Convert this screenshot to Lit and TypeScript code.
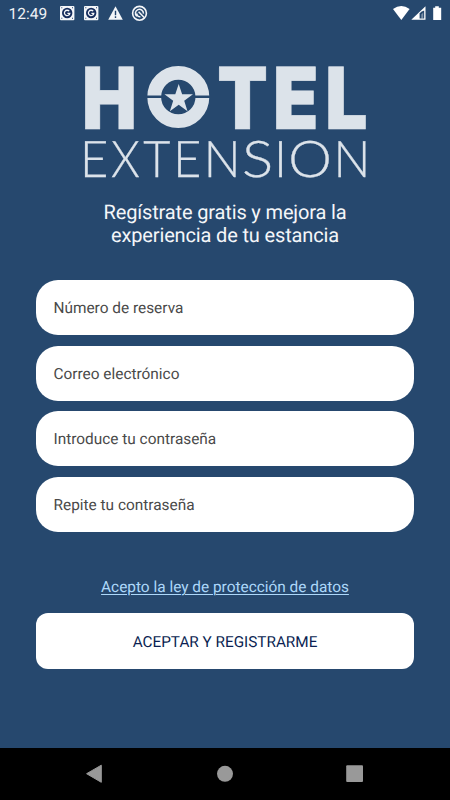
import { LitElement, html, css, svg } from "lit";
import { customElement, property } from "lit/decorators.js";

@customElement("status-bar")
class StatusBar extends LitElement {
  static styles = css`
    :host { display: flex; height: 28px; align-items: center; justify-content: space-between; color: #eef1f5; }
    .time { font: 400 15.5px/28px Roboto, sans-serif; text-rendering: geometricPrecision; width: 50px; padding-left: 8.5px; box-sizing: border-box; }
    .left { display: flex; align-items: center; }
    .icons { display: block; }
  `;
  private gBox(x: number) {
    return svg`<g transform="translate(${x} 6)">
      <rect width="14.4" height="14.2" rx="1" fill="#f4f6f9"/>
      <circle cx="7.2" cy="7" r="5.2" fill="#152c5c"/>
      <path d="M9.2 5.2A2.7 2.7 0 1 0 9.8 7.3H7.4" fill="none" stroke="#f4f6f9" stroke-width="1.3"/>
      <path d="M1.3 1.3h1v1h-1zM12 1.3h1v1h-1zM1.3 11.8h1v1h-1zM12 11.8h1v1h-1z" fill="#20406a"/>
    </g>`;
  }
  render() {
    return html`
      <div class="left">
        <span class="time">12:49</span>
        <svg class="icons" width="110" height="28" viewBox="50 0 110 28">
          ${this.gBox(60)}${this.gBox(84)}
          <path d="M115.5 6.3L122.8 19.7H108.2Z" fill="#f4f6f9"/>
          <path d="M115.5 10.8V15.2M115.5 16.3V17.9" stroke="#20406a" stroke-width="1.4"/>
          <circle cx="139.5" cy="13.3" r="6.9" fill="none" stroke="#f4f6f9" stroke-width="1.6"/>
          <path d="M136.8 16.3A4 4 0 1 1 143.4 13.6M138.6 11.8L144.2 17.6M136.8 13.5A3.2 3.2 0 0 0 140.4 16.8" fill="none" stroke="#f4f6f9" stroke-width="1.5"/>
        </svg>
      </div>
      <svg class="icons" width="60" height="28" viewBox="390 0 60 28">
        <path d="M393 9Q401.3 3.2 409.6 9L401.3 20Z" fill="#fff"/>
        <path d="M425.5 6.3V19.7H411.3Z" fill="#fff"/>
        <path d="M424.2 10.6V18.4H419.6V13.4Q420.6 11.6 424.2 10.6Z" fill="#26486e"/>
        <path d="M421.3 14.4L423.2 12.5V18.4H421.3Z" fill="#fff" fill-opacity=".4"/>
        <path d="M433.2 7.8H435.2V6.2H438.8V7.8H441.2V20H433.2Z" fill="#fff"/>
      </svg>`;
  }
}

type Letter = [string, number, number];

@customElement("brand-logo")
class BrandLogo extends LitElement {
  static styles = css`
    :host { display: block; width: 284px; height: 116px; }
    .logo { display: block; overflow: visible; }
    .bold { font: 900 100px Inter, sans-serif; fill: #dce3ea; stroke: #dce3ea; stroke-width: .8; }
    .thin { font: 300 100px Lato, sans-serif; fill: #dce3ea; stroke: #dce3ea; stroke-width: .6; }
  `;
  private ctx = document.createElement("canvas").getContext("2d")!;

  /** Fits each letter's ink into the given horizontal span and its cap height into the line. */
  private line(cls: string, font: string, top: number, base: number, letters: Letter[]) {
    this.ctx.font = font;
    const cap = this.ctx.measureText("H").actualBoundingBoxAscent;
    const sy = (base - top) / cap;
    return letters.map(([ch, x0, x1]) => {
      const m = this.ctx.measureText(ch);
      const sx = (x1 - x0) / (m.actualBoundingBoxRight + m.actualBoundingBoxLeft);
      const tx = x0 + m.actualBoundingBoxLeft * sx;
      return svg`<text class=${cls} transform="matrix(${sx} 0 0 ${sy} ${tx} ${base})">${ch}</text>`;
    });
  }

  render() {
    const star = Array.from({ length: 10 }, (_, i) => {
      const r = i % 2 ? 5.8 : 15;
      const a = (i * 36 - 90) * Math.PI / 180;
      return `${(178.7 + r * Math.cos(a)).toFixed(2)},${(99 + r * Math.sin(a)).toFixed(2)}`;
    }).join(" ");
    return html`<svg class="logo" width="284" height="116" viewBox="83 65 284 116">
      ${this.line("bold", "900 100px Inter, sans-serif", 66.4, 128.8, [
        ["H", 84.9, 133.8], ["T", 218.7, 265.8], ["E", 276, 316], ["L", 328.2, 365.5]])}
      <circle cx="178.3" cy="97" r="24.1" fill="none" stroke="#dce3ea" stroke-width="13.8"/>
      <path d="M146 96.8H162M194 96.8H211" stroke="#26486e" stroke-width="2.6"/>
      <polygon points=${star} fill="#dce3ea"/>
      ${this.line("thin", "300 100px Lato, sans-serif", 140.3, 176.7, [
        ["E", 85, 106], ["X", 112, 139.3], ["T", 143.8, 170], ["E", 178, 198.8], ["N", 208.7, 236],
        ["S", 244.3, 270], ["I", 279, 282], ["O", 291, 329], ["N", 338.3, 365.6]])}
    </svg>`;
  }
}

@customElement("form-field")
class FormField extends LitElement {
  @property() label = "";
  static styles = css`
    :host { display: flex; align-items: center; height: 55px; border-radius: 22px; background: #fff; padding: 1.6px 17.5px 0; box-sizing: border-box;
      font: 400 15.4px Roboto, sans-serif; text-rendering: geometricPrecision; color: #4a4a4a; }
  `;
  render() { return html`<span>${this.label}</span>`; }
}

@customElement("nav-bar")
class NavBar extends LitElement {
  static styles = css`
    :host { display: block; height: 52px; background: #000; }
    .keys { display: block; }
  `;
  render() {
    return html`<svg class="keys" width="450" height="52" viewBox="0 748 450 52" fill="#999">
      <path d="M86.6 773.7L101.3 765.2V782.3Z" stroke="#999" stroke-width="1" stroke-linejoin="round"/>
      <circle cx="225" cy="773.8" r="8"/>
      <rect x="346.2" y="765.3" width="16.8" height="16.6" rx="1"/>
    </svg>`;
  }
}

@customElement("app-root")
class AppRoot extends LitElement {
  static styles = css`
    :host { display: flex; flex-direction: column; width: 450px; height: 800px; background: #26486e; font-family: Roboto, sans-serif; text-rendering: geometricPrecision; overflow: hidden; }
    .page { flex: 1; display: flex; flex-direction: column; padding: 37px 36px 0; }
    .logo { margin-left: 47px; }
    .title { margin: 20px 0 0; text-align: center; font-size: 20px; line-height: 23px; font-weight: 400; letter-spacing: -.15px; color: #f4f6f9; }
    .fields { display: flex; flex-direction: column; gap: 10.6px; margin-top: 33px; }
    .terms { margin-top: 45px; text-align: center; font-size: 15.4px; line-height: 20px; color: #add8fa; text-decoration: underline; text-underline-offset: 2px; text-decoration-thickness: 1px; }
    .submit { margin-top: 16px; height: 56px; border: 0; border-radius: 12px; background: #fff; color: #0b1f52; font: 400 15.3px Roboto, sans-serif; text-rendering: geometricPrecision; padding: 1.5px 0 0; }
  `;
  render() {
    const fields = ["Número de reserva", "Correo electrónico", "Introduce tu contraseña", "Repite tu contraseña"];
    return html`
      <status-bar></status-bar>
      <main class="page">
        <brand-logo class="logo"></brand-logo>
        <h1 class="title">Regístrate gratis y mejora la<br>experiencia de tu estancia</h1>
        <div class="fields">${fields.map((f) => html`<form-field .label=${f}></form-field>`)}</div>
        <a class="terms">Acepto la ley de protección de datos</a>
        <button class="submit">ACEPTAR Y REGISTRARME</button>
      </main>
      <nav-bar></nav-bar>`;
  }
}
